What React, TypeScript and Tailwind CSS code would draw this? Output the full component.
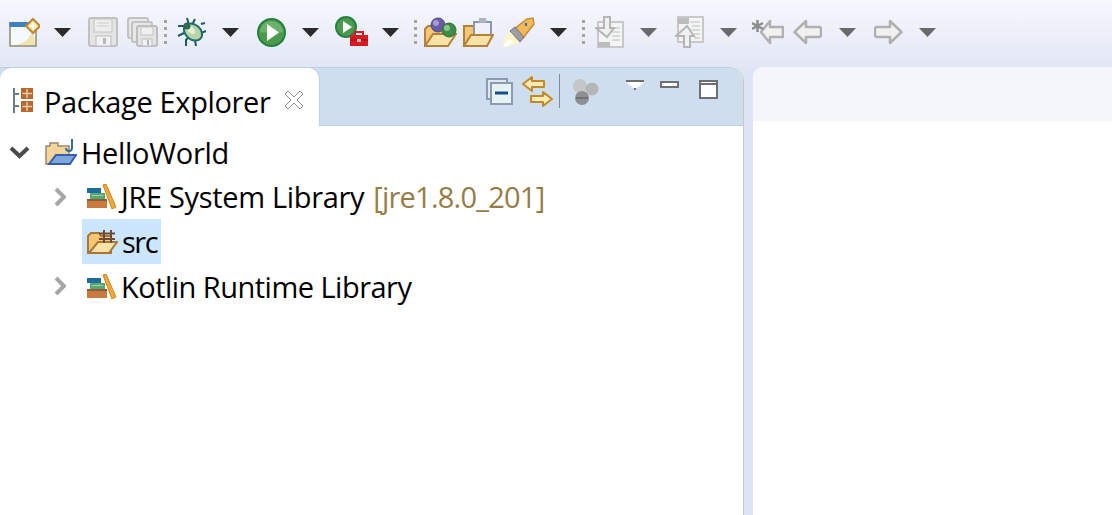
const Caret = ({ ml, dim }: { ml: string; dim?: boolean }) => (
  <svg width="17" height="9" viewBox="0 0 17 9" className={`${ml} shrink-0`}>
    <path d="M0 0H17L8.5 9Z" fill={dim ? "#6a6a6e" : "#2b2b2b"} />
  </svg>
);

const Grip = ({ ml }: { ml: string }) => (
  <div className={`${ml} flex w-[3px] shrink-0 flex-col gap-[4px]`}>
    <div className="h-[3px] bg-[#a8a498]" />
    <div className="h-[3px] bg-[#a8a498]" />
    <div className="h-[3px] bg-[#a8a498]" />
    <div className="h-[3px] bg-[#a8a498]" />
  </div>
);

const NewIcon = ({ ml }: { ml: string }) => (
  <svg width="31" height="30" viewBox="0 0 31 30" className={`${ml} shrink-0`}>
    <rect x="1" y="6" width="26" height="23" fill="#f3f9fe" stroke="#8e8a6c" strokeWidth="1.5" />
    <rect x="0.5" y="5" width="24" height="5" fill="#3f7fc4" />
    <path d="M5 28C15 27 21 22 24 12L26 28Z" fill="#efe3b0" />
    <path d="M24 2L31 9L24 16L17 9Z" fill="#f8e7a8" stroke="#b88a35" strokeWidth="2" />
    <path d="M24 6V12M21 9H27" stroke="#fff" strokeWidth="1.5" />
  </svg>
);

const SaveIcon = ({ ml }: { ml: string }) => (
  <svg width="30" height="30" viewBox="0 0 30 30" className={`${ml} shrink-0`}>
    <rect x="1" y="1" width="28" height="28" rx="2" fill="#e4e4e4" stroke="#c0c0c0" strokeWidth="2" />
    <rect x="6" y="2" width="18" height="13" fill="#ededed" stroke="#c4c4c4" />
    <path d="M9 6H21M9 9H21" stroke="#cfcfcf" />
    <rect x="8" y="19" width="15" height="10" fill="#f2f2f2" stroke="#bbb" />
    <rect x="15" y="21" width="3" height="6" fill="#b5b5b5" />
  </svg>
);

const SaveAllIcon = ({ ml }: { ml: string }) => (
  <svg width="31" height="30" viewBox="0 0 31 30" className={`${ml} shrink-0`}>
    <rect x="1" y="1" width="20" height="20" rx="2" fill="#e8e8e8" stroke="#c2c2c2" strokeWidth="2" />
    <rect x="5" y="5" width="20" height="20" rx="2" fill="#e8e8e8" stroke="#c2c2c2" strokeWidth="2" />
    <rect x="10" y="9" width="20" height="20" rx="2" fill="#e4e4e4" stroke="#bdbdbd" strokeWidth="2" />
    <rect x="14" y="10" width="12" height="8" fill="#f0f0f0" stroke="#c4c4c4" />
    <rect x="15" y="22" width="10" height="7" fill="#f2f2f2" stroke="#bbb" />
    <rect x="20" y="23" width="2" height="5" fill="#b5b5b5" />
  </svg>
);

const BugIcon = ({ ml }: { ml: string }) => (
  <svg width="30" height="30" viewBox="0 0 30 30" className={`${ml} shrink-0`}>
    <g stroke="#1f5a63" strokeWidth="2" fill="none">
      <path d="M10 1L12 8M18 2L15 8" />
      <path d="M1 9H7L10 12M1 19L7 16M24 7L28 6M29 14L24 16M9 29L9 23L12 20M19 29L18 23" />
    </g>
    <ellipse cx="16" cy="15" rx="10" ry="7.5" transform="rotate(40 16 15)" fill="#b8d3a8" stroke="#1f6a6c" strokeWidth="2" />
    <ellipse cx="14" cy="13" rx="5" ry="3" transform="rotate(40 14 13)" fill="#e4efd5" />
    <circle cx="10" cy="9" r="3.5" fill="#2d6b50" />
  </svg>
);

const RunIcon = ({ ml }: { ml: string }) => (
  <svg width="29" height="29" viewBox="0 0 29 29" className={`${ml} shrink-0`}>
    <circle cx="14.5" cy="14.5" r="13.5" fill="#4b9a4e" stroke="#24803f" strokeWidth="2" />
    <path d="M3 14.5A11.5 11.5 0 0 1 26 14.5Z" fill="#6bb06d" />
    <path d="M10 6L22 14.5L10 23Z" fill="#fff" />
  </svg>
);

const ExtIcon = ({ ml }: { ml: string }) => (
  <svg width="33" height="32" viewBox="0 0 33 32" className={`${ml} shrink-0`}>
    <circle cx="11" cy="11" r="10" fill="#4b9a4e" stroke="#24803f" strokeWidth="2" />
    <path d="M8 5L17 11L8 17Z" fill="#fff" />
    <rect x="15" y="19" width="18" height="11" fill="#d81a22" />
    <path d="M20 19V16H28V19" fill="none" stroke="#d81a22" strokeWidth="2" />
    <path d="M15 24H33" stroke="#8e1015" />
    <rect x="22" y="23" width="4" height="3" fill="#f6b4b4" />
  </svg>
);

const OpenTypeIcon = ({ ml }: { ml: string }) => (
  <svg width="33" height="30" viewBox="0 0 33 30" className={`${ml} shrink-0`}>
    <path d="M1 29V12L4 9H12L14 12H24V29Z" fill="#f4c774" stroke="#b5803a" strokeWidth="2" />
    <path d="M1 29L9 17H32L24 29Z" fill="#fbe3a8" stroke="#b5803a" strokeWidth="2" />
    <circle cx="14" cy="8" r="7" fill="#6a5ba3" stroke="#4f4588" />
    <circle cx="12" cy="6" r="3" fill="#a69bd0" />
    <circle cx="25" cy="13" r="7" fill="#3e8c45" stroke="#2b6f35" />
    <circle cx="23" cy="11" r="3" fill="#8cc68e" />
  </svg>
);

const OpenTaskIcon = ({ ml }: { ml: string }) => (
  <svg width="31" height="30" viewBox="0 0 31 30" className={`${ml} shrink-0`}>
    <path d="M1 29V9H10L12 12H24V29Z" fill="#f4c774" stroke="#b5803a" strokeWidth="2" />
    <rect x="11" y="5" width="17" height="13" fill="#eef1f8" stroke="#8b97ad" strokeWidth="2" />
    <rect x="16" y="1" width="7" height="5" fill="#aab4c6" />
    <path d="M1 29L8 18H30L24 29Z" fill="#fbe3a8" stroke="#b5803a" strokeWidth="2" />
  </svg>
);

const PenIcon = ({ ml }: { ml: string }) => (
  <svg width="33" height="31" viewBox="0 0 33 31" className={`${ml} shrink-0`}>
    <path d="M12 12L25 2L31 1L32 7L21 21Z" fill="#f2b95a" stroke="#c98d3a" strokeWidth="1.5" />
    <path d="M8 14L13 10L22 20L18 25Z" fill="#a09ca2" stroke="#77737a" />
    <path d="M1 30C1 24 4 18 8 15L17 25C11 29 6 30 1 30Z" fill="#fdf6c6" />
    <path d="M1 30C2 27 5 24 8 22L11 25C8 28 4 30 1 30Z" fill="#fff" />
    <rect x="23" y="6" width="2" height="3" fill="#3769b5" />
  </svg>
);

const ImportIcon = ({ ml }: { ml: string }) => (
  <svg width="29" height="32" viewBox="0 0 29 32" className={`${ml} shrink-0`}>
    <rect x="3" y="6" width="25" height="25" fill="#f3f4f6" stroke="#c8c8c8" strokeWidth="2" />
    <path d="M15 12H25M17 16H25M17 20H25M17 24H25" stroke="#cfcfcf" strokeWidth="1.5" />
    <path d="M9 1H15V12H19L12 21L1 12H9Z" fill="#f1f1f1" stroke="#b5b5b5" strokeWidth="2" />
    <rect x="3" y="26" width="12" height="5" fill="#bdbdbd" />
  </svg>
);

const ExportIcon = ({ ml }: { ml: string }) => (
  <svg width="29" height="32" viewBox="0 0 29 32" className={`${ml} shrink-0`}>
    <rect x="3" y="1" width="25" height="25" fill="#f3f4f6" stroke="#c8c8c8" strokeWidth="2" />
    <rect x="3" y="2" width="11" height="6" fill="#bdbdbd" />
    <path d="M15 6H25M17 10H25M17 14H25M19 18H25M19 22H25" stroke="#cfcfcf" strokeWidth="1.5" />
    <path d="M9 31H15V20H19L12 10L1 20H9Z" fill="#f1f1f1" stroke="#b5b5b5" strokeWidth="2" />
  </svg>
);

const LastEditIcon = ({ ml }: { ml: string }) => (
  <svg width="32" height="26" viewBox="0 0 32 26" className={`${ml} shrink-0`}>
    <path d="M8 13L17 24V18H30V8H17V2Z" transform="translate(1 0)" fill="#f1f1f1" stroke="#b0b0b0" strokeWidth="2.5" strokeLinejoin="round" />
    <path d="M5.500 1V13M0 4L11 10M11 4L0 10" stroke="#8c8c8c" strokeWidth="2.500" />
  </svg>
);

const BackIcon = ({ ml }: { ml: string }) => (
  <svg width="29" height="26" viewBox="0 0 29 26" className={`${ml} shrink-0`}>
    <path d="M1.500 13L13 2V8H26Q28 8 28 10V16Q28 18 26 18H13V24Z" fill="#f1f1f1" stroke="#b0b0b0" strokeWidth="2.5" strokeLinejoin="round" />
  </svg>
);

const ForwardIcon = ({ ml }: { ml: string }) => (
  <svg width="29" height="26" viewBox="0 0 29 26" className={`${ml} shrink-0`}>
    <path d="M27.500 13L16 2V8H3Q1 8 1 10V16Q1 18 3 18H16V24Z" fill="#f1f1f1" stroke="#b0b0b0" strokeWidth="2.5" strokeLinejoin="round" />
  </svg>
);

const LibraryIcon = () => (
  <svg width="30" height="25" viewBox="0 0 30 25" className="shrink-0">
    <rect x="0" y="15" width="20" height="9" fill="#c97a3f" />
    <rect x="0" y="15" width="20" height="2" fill="#8f5a3a" />
    <rect x="3" y="9" width="15" height="6" fill="#55a86e" />
    <rect x="5" y="11" width="11" height="1" fill="#9ed0ad" />
    <rect x="0" y="4" width="14" height="5" fill="#1f6c9c" />
    <path d="M16 1L19 0L29 23L25 25Z" fill="#f0a938" stroke="#c98625" />
  </svg>
);

const Chevron = () => (
  <svg width="12" height="20" viewBox="0 0 12 20" className="shrink-0">
    <path d="M2 2L10 10L2 18" fill="none" stroke="#a6a6a6" strokeWidth="4" />
  </svg>
);

const rowText = "text-[29px] leading-none text-black whitespace-nowrap";

export default function App() {
  return (
    <div className="flex h-[515px] w-[1112px] flex-col overflow-hidden bg-[#dfe5f5] font-['Open_Sans','Noto_Sans',sans-serif]">
      {/* Toolbar */}
      <div className="flex h-[67px] shrink-0 items-center bg-gradient-to-b from-[#f6f8fd] to-[#e3e7f5] pb-[3px] pl-[9px]">
        <NewIcon ml="ml-0" />
        <Caret ml="ml-[14px]" />
        <SaveIcon ml="ml-[17px]" />
        <SaveAllIcon ml="ml-[9px]" />
        <Grip ml="ml-[6px]" />
        <BugIcon ml="ml-[10px]" />
        <Caret ml="ml-[15px]" />
        <RunIcon ml="ml-[18px]" />
        <Caret ml="ml-[16px]" />
        <ExtIcon ml="ml-[16px]" />
        <Caret ml="ml-[14px]" />
        <Grip ml="ml-[15px]" />
        <OpenTypeIcon ml="ml-[7px]" />
        <OpenTaskIcon ml="ml-[6px]" />
        <PenIcon ml="ml-[8px]" />
        <Caret ml="ml-[15px]" />
        <Grip ml="ml-[15px]" />
        <ImportIcon ml="ml-[10px]" />
        <Caret ml="ml-[16px]" dim />
        <ExportIcon ml="ml-[18px]" />
        <Caret ml="ml-[16px]" dim />
        <LastEditIcon ml="ml-[15px]" />
        <BackIcon ml="ml-[9px]" />
        <Caret ml="ml-[17px]" dim />
        <ForwardIcon ml="ml-[18px]" />
        <Caret ml="ml-[16px]" dim />
      </div>

      <div className="flex min-h-0 flex-1">
        {/* Package Explorer panel */}
        <div className="flex w-[744px] shrink-0 flex-col overflow-hidden rounded-tr-[14px] border-r border-[#c8c8c8] bg-white">
          <div className="flex h-[59px] shrink-0 rounded-tr-[14px] border-t border-b border-[#c0cfdf] bg-[#cfdeee]">
            <div className="mb-[-1px] mt-[-1px] flex h-[59px] w-[320px] items-center rounded-t-[12px] border-t border-r border-[#c0cfdf] bg-white pl-[12px] pt-[9px]">
              <svg width="22" height="26" viewBox="0 0 22 26" className="mb-[3px] shrink-0">
                <path d="M2 1V26M2 7H7M2 19H7" stroke="#6e7b8e" strokeWidth="2" fill="none" />
                <rect x="9" y="1" width="12" height="11" fill="#b5672f" />
                <rect x="9" y="14" width="12" height="11" fill="#b5672f" />
                <path d="M15 2V11M10 6.500H20M15 15V24M10 19.500H20" stroke="#e9c9a4" strokeWidth="1.500" />
              </svg>
              <span className={`${rowText} ml-[10px] tracking-[-0.35px]`}>Package Explorer</span>
              <svg width="20" height="20" viewBox="0 0 20 20" className="mb-[3px] ml-[13px] shrink-0">
                <path d="M1 4L4 1L10 7L16 1L19 4L13 10L19 16L16 19L10 13L4 19L1 16L7 10Z" fill="#fff" stroke="#8f8f8f" />
              </svg>
            </div>
            <div className="ml-auto flex h-[57px] items-center pb-[12px]">
              <svg width="27" height="27" viewBox="0 0 27 27" className="mt-[2px] shrink-0">
                <rect x="1" y="1" width="20" height="20" fill="#dfe8f0" stroke="#8c9bb0" strokeWidth="2" />
                <rect x="5" y="5" width="21" height="21" fill="#e6f2f3" stroke="#8c9bb0" strokeWidth="2" />
                <path d="M9 15H22" stroke="#164f84" strokeWidth="3" />
              </svg>
              <svg width="31" height="31" viewBox="0 0 31 31" className="ml-[9px] mt-[2px] shrink-0">
                <path d="M1 8L10 1V5H22V11H10V15Z" fill="#fbeab8" stroke="#c28a22" strokeWidth="2" strokeLinejoin="round" />
                <path d="M30 23L21 16V20H9V26H21V30Z" fill="#fbeab8" stroke="#c28a22" strokeWidth="2" strokeLinejoin="round" />
              </svg>
              <div className="ml-[6px] h-[34px] w-px bg-[#7e8b9a]" />
              <svg width="27" height="27" viewBox="0 0 27 27" className="ml-[12px] mt-[2px] shrink-0">
                <circle cx="8" cy="8" r="7" fill="#c4c6c8" />
                <circle cx="20" cy="11" r="6.500" fill="#b4b6b8" />
                <circle cx="10" cy="20" r="7" fill="#8d8f91" />
                <path d="M4 20H16" stroke="#6f7173" strokeWidth="2" />
              </svg>
              <svg width="18" height="11" viewBox="0 0 18 11" className="mb-[11px] ml-[27px] shrink-0">
                <path d="M0 0H18V2L11 8H7L0 2Z" fill="#fff" />
                <path d="M0 1H18" stroke="#6f6f6f" strokeWidth="2" />
                <rect x="8" y="8" width="2" height="2" fill="#6f6f6f" />
              </svg>
              <div className="mb-[13px] ml-[16px] h-[7px] w-[19px] border-2 border-[#6f6f6f] bg-white" />
              <div className="mb-[2px] ml-[20px] mr-[25px] flex h-[19px] w-[19px] flex-col border-2 border-[#6f6f6f] bg-white">
                <div className="h-[3px] border-b-2 border-[#6f6f6f]" />
              </div>
            </div>
          </div>

          {/* Tree */}
          <div className="flex flex-col pt-[4px]">
            <div className="flex h-[44px] items-center pl-[9px]">
              <svg width="21" height="13" viewBox="0 0 21 13" className="shrink-0">
                <path d="M2 2L10.500 10L19 2" fill="none" stroke="#4a4a4a" strokeWidth="4" />
              </svg>
              <svg width="32" height="28" viewBox="0 0 32 28" className="ml-[15px] shrink-0">
                <path d="M1 26V8H5V5H13V8H24V26Z" fill="#f4d49a" stroke="#9a8a6c" strokeWidth="1.500" />
                <path d="M4 26L11 17H31L25 26Z" fill="#7ba7de" stroke="#3a5ca8" strokeWidth="2" />
                <path d="M27 1V10Q27 13 24 13T21 10" fill="none" stroke="#2f6f9e" strokeWidth="2" />
              </svg>
              <span className={`${rowText} ml-[4px] tracking-[-0.3px]`}>HelloWorld</span>
            </div>
            <div className="flex h-[45px] items-center pl-[54px]">
              <Chevron />
              <div className="ml-[21px]"><LibraryIcon /></div>
              <span className={`${rowText} ml-[4px] tracking-[-0.33px]`}>JRE System Library</span>
              <span className="ml-[9px] whitespace-nowrap text-[29px] leading-none tracking-[-0.76px] text-[#957d47]">[jre1.8.0_201]</span>
            </div>
            <div className="flex h-[45px] items-center pl-[82px]">
              <div className="flex h-[45px] w-[79px] items-center bg-[#cde6ff] pl-[5px]">
                <svg width="31" height="24" viewBox="0 0 31 24" className="shrink-0">
                  <path d="M1 23V6L4 3H12L14 6H24V23Z" fill="#f4c774" stroke="#a9773a" strokeWidth="2" />
                  <path d="M2 23L11 12H30L22 23Z" fill="#fbe3a8" stroke="#a9773a" strokeWidth="2" />
                  <path d="M17 0V13M24 0V13M12 3.500H28M12 9H28" stroke="#6b4a3a" strokeWidth="2" />
                </svg>
                <span className={`${rowText} ml-[4px] tracking-[-1.5px]`}>src</span>
              </div>
            </div>
            <div className="flex h-[44px] items-center pl-[54px]">
              <Chevron />
              <div className="ml-[21px]"><LibraryIcon /></div>
              <span className={`${rowText} ml-[4px] tracking-[-0.52px]`}>Kotlin Runtime Library</span>
            </div>
          </div>
        </div>

        {/* Editor area */}
        <div className="ml-[9px] flex flex-1 flex-col overflow-hidden rounded-tl-[10px] bg-white">
          <div className="h-[54px] shrink-0 bg-[#f4f6fc]" />
        </div>
      </div>
    </div>
  );
}
